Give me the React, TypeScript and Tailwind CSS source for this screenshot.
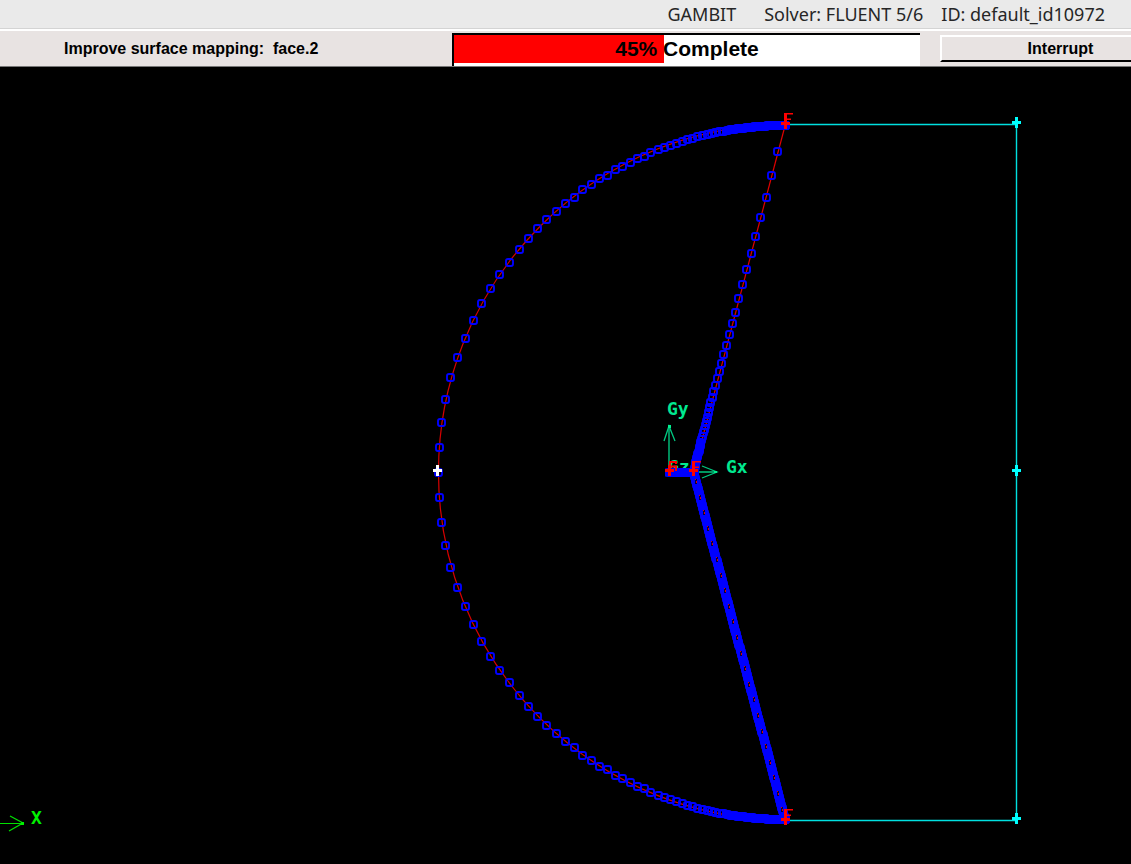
import React from "react";

type Point = [number, number];

const CENTER: Point = [785, 472];
const RADIUS = 347;

const arcPoints: Point[] = [
  [439, 447], [441, 422], [445, 399], [450, 377], [457, 357], [465, 338],
  [473, 320], [481, 303], [490, 288], [499, 274], [509, 262], [519, 249],
  [528, 238], [537, 228], [546, 219], [556, 211], [565, 203], [574, 197],
  [582, 189], [591, 184], [599, 178], [607, 175], [615, 169], [622, 166],
  [630, 162], [637, 158], [644, 156], [650, 152],
];

const upperEdgePoints: Point[] = [
  [777, 151], [771, 175], [766, 197], [760, 217], [755, 236], [751, 253],
  [746, 269], [742, 284], [738, 298], [735, 312], [732, 323], [729, 334],
  [726, 345], [723, 354], [721, 363], [719, 371], [717, 378], [715, 385],
];

function denseArc(): Point[] {
  const points: Point[] = [];
  let length = 408;
  let step = 7;
  for (let i = 0; i < 50 && length < 545; i++) {
    length = Math.min(length + step, 545);
    step *= 0.957;
    const angle = length / RADIUS;
    points.push([
      Math.round(CENTER[0] - RADIUS * Math.cos(angle)),
      Math.round(CENTER[1] - RADIUS * Math.sin(angle)),
    ]);
  }
  return points;
}

function along(from: Point, to: Point, first: number, ratio: number, least: number): Point[] {
  const points: Point[] = [];
  const length = Math.hypot(to[0] - from[0], to[1] - from[1]);
  let travelled = 0;
  let step = first;
  while (travelled <= length) {
    const t = travelled / length;
    points.push([
      Math.round(from[0] + (to[0] - from[0]) * t),
      Math.round(from[1] + (to[1] - from[1]) * t),
    ]);
    travelled += step;
    step = Math.max(step * ratio, least);
  }
  return points;
}

const upperArc = [...arcPoints, ...denseArc()];
const lowerArc = upperArc.map(([x, y]): Point => [x, 944 - y]);
const nodes: Point[] = [
  [438, 472],
  ...upperArc,
  ...lowerArc,
  [785, 125],
  [785, 819],
  ...upperEdgePoints,
  ...along([713, 391], [693, 472], 6, 0.94, 2),
  ...along([693, 472], [785, 820], 2, 1, 2),
  ...along([669, 472], [693, 472], 2, 1, 2),
];

const seams = Array.from({ length: 22 }, (_, i): Point => {
  const y = 481 + i * 15.6;
  return [Math.round(693.5 + ((y - 472) * 92) / 348), Math.round(y)];
});

function Node({ at: [x, y] }: { at: Point }) {
  return <rect x={x - 3} y={y - 3} width="7" height="7" rx="2" fill="none" stroke="#0000ff" strokeWidth="1.9" />;
}

function Cross({ at: [x, y], color }: { at: Point; color: string }) {
  return <path d={`M${x - 1} ${y - 5}h3v4h3v3h-3v4h-3v-4h-3v-3h3z`} fill={color} />;
}

function Label({ at: [x, y], color, children }: { at: Point; color: string; children: string }) {
  return (
    <text x={x} y={y} fill={color} className="font-['DejaVu_Sans_Mono',monospace] text-[18px] font-bold">
      {children}
    </text>
  );
}

function FixedMark({ at: [x, y] }: { at: Point }) {
  return <path d={`M${x - 1} ${y - 12}h9v1.5h-6v4h4v1.5h-4v7h-3z`} fill="#ff0000" />;
}

function Viewport() {
  return (
    <svg viewBox="0 67 1131 797" className="block h-auto w-full" role="img" aria-label="Face mesh">
      <path d="M786 124.5H1016.5V820.5H786" fill="none" stroke="#00e0e0" strokeWidth="1.4" />
      <g fill="none" stroke="#00c880">
        <path d="M669 472V425" strokeWidth="1.4" />
        <path d="M664 441l5-15 6 15M702 466l15 6-15 6" strokeWidth="1.3" />
        <path d="M669 472H717" strokeWidth="1.4" />
        <path d="M668 428h3v-3h-3zM714 473h3v-2h-3z" fill="#00f090" stroke="none" />
      </g>
      <Label at={[667, 415]} color="#00e890">Gy</Label>
      <Label at={[726, 473]} color="#00e890">Gx</Label>
      <Label at={[668, 473]} color="#00e890">Gz</Label>
      <path
        d="M785 124.5A347 347.5 0 0 0 438.5 472A347 347.5 0 0 0 785 820"
        fill="none"
        stroke="#d80000"
        strokeWidth="1.2"
      />
      <path d="M785.5 124L693.5 472" fill="none" stroke="#e00000" strokeWidth="1.2" />
      {nodes.map((p, i) => (
        <Node key={i} at={p} />
      ))}
      <g fill="none" stroke="#0000ff" strokeWidth="8">
        <path d="M785 125.5A347 347 0 0 0 722 131.2M785 819.5A347 347 0 0 1 722 813.8" />
        <path d="M702 440L693.5 472.5L785.5 820M665 472.5H694" />
      </g>
      {seams.map(([x, y]) => (
        <g key={y}>
          <path d={`M${x - 1} ${y - 2}h2v5h-2z`} fill="#000040" />
          <path d={`M${x - 1} ${y - 2}h1v1h-1zM${x} ${y}h1v2h-1z`} fill="#e00000" />
        </g>
      ))}
      <g fill="none" stroke="#00e000">
        <path d="M0 823.5H24" />
        <path d="M10 816l13 7-14 8" strokeWidth="1.3" />
        <path d="M21 822h3v3h-3z" fill="#00f000" stroke="none" />
      </g>
      <Label at={[31, 824]} color="#00f000">X</Label>
      <FixedMark at={[785, 125]} />
      <FixedMark at={[785, 821]} />
      <path d="M670 473V462H676V464M670 466.5H676V471" fill="none" stroke="#ff0000" strokeWidth="2" />
      <FixedMark at={[693, 473]} />
      <Cross at={[785, 123]} color="#ff0000" />
      <Cross at={[785, 819]} color="#ff0000" />
      <Cross at={[669, 470]} color="#ff0000" />
      <Cross at={[693, 470]} color="#ff0000" />
      <Cross at={[437, 470]} color="#ffffff" />
      <Cross at={[1016, 122]} color="#00ffff" />
      <Cross at={[1016, 470]} color="#00ffff" />
      <Cross at={[1016, 818]} color="#00ffff" />
    </svg>
  );
}

export default function App() {
  return (
    <div className="min-h-screen overflow-x-hidden bg-black text-black">
      <header className="flex h-[29px] items-center justify-end gap-7 border-b border-[#d4d4d4] bg-[#eaeaea] pr-[26px] font-['Noto_Sans',sans-serif] text-[18px] leading-7 text-[#262626]">
        <span>GAMBIT</span>
        <span className="flex gap-[18px]">
          <span>Solver: FLUENT 5/6</span>
          <span>ID: default_id10972</span>
        </span>
      </header>
      <div className="grid h-[38px] grid-cols-[452fr_468fr_211fr] border-t-2 border-b border-t-white border-b-[#777] bg-[#e8e3e2] font-['Liberation_Sans',sans-serif] font-bold">
        <p className="self-center whitespace-pre pl-16 text-[16px] leading-5">Improve surface mapping:  face.2</p>
        <div
          role="progressbar"
          aria-label="Progress"
          aria-valuenow={45}
          className="mt-0.5 grid border-t-2 border-l-2 border-black bg-white"
        >
          <div className="col-start-1 row-start-1 mb-[3px] w-[45%] bg-[#ff0000]" />
          <span className="col-start-1 row-start-1 self-start justify-self-center text-[21px] leading-7">
            45% Complete
          </span>
        </div>
        <div className="flex overflow-hidden py-1 pl-5">
          <button
            type="button"
            className="flex-1 border-t-2 border-b-2 border-l-2 border-t-white border-b-black border-l-white pl-12 text-[16px] leading-5"
          >
            Interrupt
          </button>
        </div>
      </div>
      <main>
        <Viewport />
      </main>
    </div>
  );
}
